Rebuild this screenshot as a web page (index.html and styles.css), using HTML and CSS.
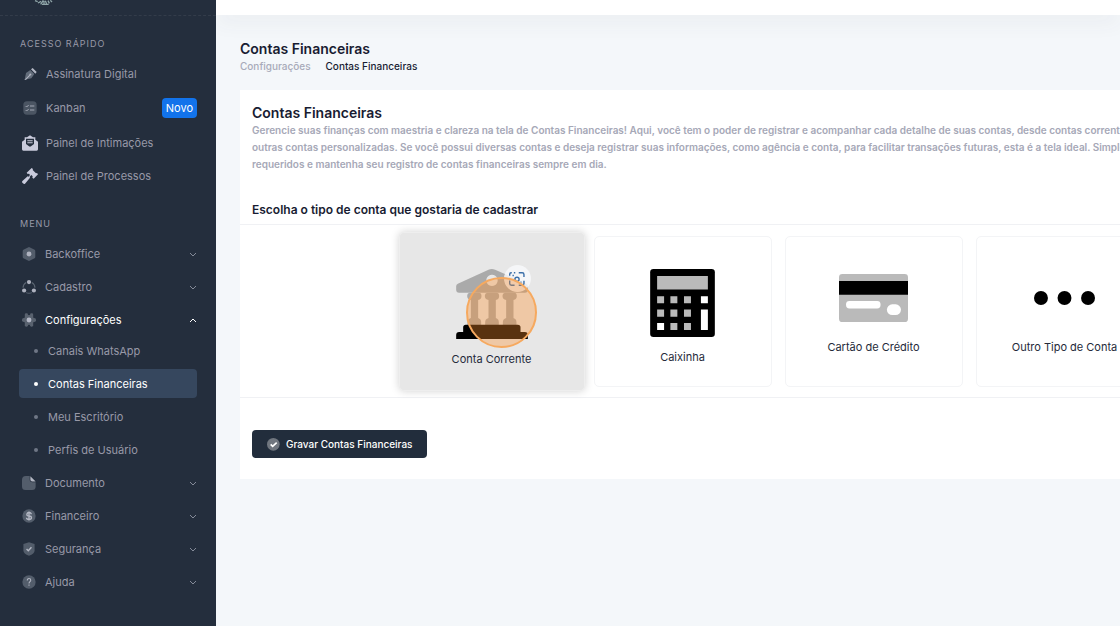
FILE: index.html
```
<!DOCTYPE html>
<html lang="pt-BR">
  <head>
    <meta charset="UTF-8" />
    <title>Contas Financeiras</title>
    <link rel="stylesheet" href="styles.css">
  </head>

  <body>
    <aside class="sidebar">
      <div class="logo">
        <svg width="22" height="5" viewBox="0 0 66 15" fill="none" stroke="#8fa5a8" stroke-width="4">
          <path d="M3 2l8 3M12 9l9-5M20 13l8-12M30 12V2M38 12l-4-10M46 10L42 2M54 6l-5-5M24 13h20" />
        </svg>
      </div>

      <nav class="quick">
        <h2>Acesso Rápido</h2>
        <a href="#">
          <svg viewBox="0 0 42 42">
            <path fill="#626c7a" d="M5 38l4-20 13-9 12 12-9 13z" />
            <path fill="#b3b7c4" d="M24 7l5-4 12 12-4 5zM4 39l3-3 12-12c-1-5 5-6 6-2 0 3-2 4-4 4L9 38z" />
          </svg>
          <span>Assinatura Digital</span>
        </a>
        <a href="#" class="tall">
          <svg viewBox="0 0 42 42">
            <rect x="1" y="1" width="40" height="40" rx="11" fill="#4b5563" />
            <path fill="none" stroke="#a4a9b6" stroke-width="3" d="M8 15l3 3 6-6M8 27l3 3 6-6M21 15h13M21 27h13" />
          </svg>
          <span>Kanban</span>
          <b class="badge">Novo</b>
        </a>
        <a href="#">
          <svg class="big" viewBox="0 0 48 48">
            <path fill="#c9cbdc" fill-rule="evenodd" d="M8 7h7l9-6 9 6h7v7l8 6v23q0 4-4 4H4q-4 0-4-4V20l8-6zM12 11v16l9 7q3 2 6 0l9-7V11z" />
            <path fill="#c9cbdc" d="M16 16h16v3H16zM16 22h16v3H16z" />
          </svg>
          <span>Painel de Intimações</span>
        </a>
        <a href="#">
          <svg class="big" viewBox="0 0 48 48">
            <path fill="#c9cbdc" d="M29 0l4 3-1 3 10 10 3-1 3 4-13 13-4-3 1-4-4-4-5 5 1 3L9 47q-3 2-6-1l-2-2q-2-3 1-6l15-13 3 1 4-5-3-4-4 1-3-4z" />
          </svg>
          <span>Painel de Processos</span>
        </a>
      </nav>

      <nav class="menu">
        <h2>Menu</h2>
        <a href="#">
          <svg viewBox="0 0 40 40">
            <path fill="#535d6b" d="M20 0l16 8q2 1 2 4v16q0 3-2 4l-16 8-16-8q-2-1-2-4V12q0-3 2-4z" />
            <circle cx="20" cy="20" r="7" fill="#aeb2bf" />
          </svg>
          <span>Backoffice</span>
          <svg class="chevron" viewBox="0 0 8 8"><path d="M1 3l3 3 3-3" /></svg>
        </a>
        <a href="#">
          <svg viewBox="0 0 40 40">
            <path fill="none" stroke="#5c6673" stroke-width="3" d="M12 7Q3 12 3 22M28 7q9 5 9 15M12 36q8 4 16 0" />
            <g fill="#aeb2bf"><circle cx="20" cy="6" r="6" /><circle cx="6" cy="30" r="6" /><circle cx="34" cy="30" r="6" /></g>
          </svg>
          <span>Cadastro</span>
          <svg class="chevron" viewBox="0 0 8 8"><path d="M1 3l3 3 3-3" /></svg>
        </a>
        <a href="#" class="open">
          <svg viewBox="0 0 40 40">
            <g fill="#59626f">
              <circle cx="20" cy="20" r="14" />
              <rect x="8" y="1" width="9" height="38" rx="4" /><rect x="23" y="1" width="9" height="38" rx="4" />
              <rect x="0" y="14" width="40" height="12" rx="5" />
            </g>
            <circle cx="20" cy="20" r="7" fill="#b4b8c6" />
          </svg>
          <span>Configurações</span>
          <svg class="chevron" viewBox="0 0 8 8"><path d="M1 6l3-3 3 3" /></svg>
        </a>
        <div class="submenu">
          <a href="#">Canais WhatsApp</a>
          <a href="#" class="active">Contas Financeiras</a>
          <a href="#">Meu Escritório</a>
          <a href="#">Perfis de Usuário</a>
        </div>
        <a href="#">
          <svg viewBox="0 0 40 40">
            <path fill="#535d6b" d="M11 0h11v10q0 8 8 8h9v12q0 10-10 10H10Q0 40 0 30V11Q0 0 11 0z" />
            <path fill="#b4b8c4" d="M24 1l15 15H29q-5 0-5-5z" />
          </svg>
          <span>Documento</span>
          <svg class="chevron" viewBox="0 0 8 8"><path d="M1 3l3 3 3-3" /></svg>
        </a>
        <a href="#">
          <svg viewBox="0 0 40 40">
            <circle cx="20" cy="20" r="19" fill="#535d6b" />
            <path fill="none" stroke="#b4b8c4" stroke-width="4" d="M27 15q-2-5-7-5t-6 5 6 5 7 5-7 5-7-5M20 7v26" />
          </svg>
          <span>Financeiro</span>
          <svg class="chevron" viewBox="0 0 8 8"><path d="M1 3l3 3 3-3" /></svg>
        </a>
        <a href="#">
          <svg viewBox="0 0 40 40">
            <path fill="#535d6b" d="M20 1l16 5v18q0 9-16 15Q4 33 4 24V6z" />
            <path fill="none" stroke="#b4b8c4" stroke-width="4" d="M13 20l5 5 9-10" />
          </svg>
          <span>Segurança</span>
          <svg class="chevron" viewBox="0 0 8 8"><path d="M1 3l3 3 3-3" /></svg>
        </a>
        <a href="#">
          <svg viewBox="0 0 40 40">
            <circle cx="20" cy="20" r="19" fill="#535d6b" />
            <path fill="none" stroke="#b4b8c4" stroke-width="3" d="M15 16q0-6 5-6t5 5c0 4-5 4-5 9M20 27v4" />
          </svg>
          <span>Ajuda</span>
          <svg class="chevron" viewBox="0 0 8 8"><path d="M1 3l3 3 3-3" /></svg>
        </a>
      </nav>
    </aside>

    <div class="page">
      <header class="topbar"></header>
      <main>
        <h1>Contas Financeiras</h1>
        <div class="breadcrumb">
          <a href="#">Configurações</a>
          <span>Contas Financeiras</span>
        </div>

        <form class="panel">
          <div class="intro">
            <h2>Contas Financeiras</h2>
            <p>
              Gerencie suas finanças com maestria e clareza na tela de Contas Financeiras! Aqui, você tem o poder de registrar e acompanhar cada detalhe de suas contas, desde contas correntes<br>
              outras contas personalizadas. Se você possui diversas contas e deseja registrar suas informações, como agência e conta, para facilitar transações futuras, esta é a tela ideal. Simplesmente<br>
              requeridos e mantenha seu registro de contas financeiras sempre em dia.
            </p>
            <h3>Escolha o tipo de conta que gostaria de cadastrar</h3>
          </div>

          <div class="types">
            <button type="button" class="type selected">
              <svg width="72" height="70" viewBox="225 143 215 210">
                <path fill="#aaa" fill-rule="evenodd" d="M225 195q0-6 5-8l92-42q10-4 20 0l93 42q5 2 5 8v10q0 9-9 9H234q-9 0-9-9zM332 160a17 17 0 1 0 1 0z" />
                <g fill="#aaa">
                  <path id="column" d="M268 214h25q8 0 8 10t-10 12v54q9 3 9 13v8h-41v-8q0-10 10-13v-54q-11-2-11-12t10-10z" />
                  <use href="#column" x="53" /><use href="#column" x="106" />
                </g>
                <path d="M254 310h156q8 0 8 8v14h13q9 0 9 9v12H225v-12q0-9 9-9h12v-14q0-8 8-8z" />
              </svg>
              <span>Conta Corrente</span>
              <i class="lens">
                <svg width="16" height="14" viewBox="0 0 46 40" fill="none" stroke="#3a6ea8" stroke-width="4">
                  <path d="M2 11V6q0-4 4-4h2M14 2h4M28 2h10q5 0 5 5v7M2 24v9q0 5 5 5h9M28 38h10q5 0 5-5v-8" />
                  <circle cx="23" cy="21" r="6" /><path d="M10 10h4M33 29h3" />
                </svg>
              </i>
              <i class="ring"></i>
            </button>
            <button type="button" class="type">
              <svg width="65" height="68" viewBox="174 146 195 205">
                <rect x="174" y="146" width="195" height="205" rx="10" />
                <path fill="#bababa" d="M195 167h153v41H195zM195 228h21v21h-21zM235 228h21v21h-21zM276 228h21v21h-21zM195 268h21v22h-21zM235 268h21v22h-21zM276 268h21v22h-21zM235 309h21v21h-21zM276 309h21v21h-21z" />
                <path fill="#fff" d="M327 228h21v21h-21zM327 268h21v62h-21zM195 309h21v21h-21z" />
              </svg>
              <span>Caixinha</span>
            </button>
            <button type="button" class="type">
              <svg width="69" height="58" viewBox="57 162 206 144">
                <rect x="57" y="162" width="206" height="144" rx="10" fill="#bababa" />
                <path d="M57 183h206v41H57z" />
                <rect x="78" y="243" width="103" height="22" rx="10" fill="#fff" />
                <rect x="200" y="253" width="42" height="32" rx="16" fill="#fff" />
              </svg>
              <span>Cartão de Crédito</span>
            </button>
            <button type="button" class="type">
              <svg width="61" height="58" viewBox="642 212 184 42">
                <circle cx="663" cy="233" r="21" /><circle cx="734" cy="233" r="21" /><circle cx="805" cy="233" r="21" />
              </svg>
              <span>Outro Tipo de Conta</span>
            </button>
          </div>

          <div class="actions">
            <button type="submit" class="save">
              <svg width="13" height="13" viewBox="0 0 39 39">
                <circle cx="19" cy="19" r="19" fill="#70767f" />
                <path fill="none" stroke="#fff" stroke-width="5" d="M11 19l6 6 12-11" />
              </svg>
              Gravar Contas Financeiras
            </button>
          </div>
        </form>
      </main>
    </div>
  </body>
</html>
```
FILE: styles.css
```
*,
*:before,
*:after {
  box-sizing: border-box;
}

body {
  margin: 0;
  display: flex;
  min-height: 100vh;
  overflow: hidden;
  font-family: Inter, "Liberation Sans", sans-serif;
  font-size: 11px;
  color: #181c32;
  background-color: #f4f7fa;
}

h1,
h2,
h3,
p {
  margin: 0;
}

a {
  color: inherit;
  text-decoration: none;
}

button {
  font-family: inherit;
  cursor: pointer;
}

.sidebar {
  flex: 0 0 216px;
  background-color: #242e3d;
  color: #9899a8;
}

.logo {
  height: 16px;
  padding-left: 34px;
  border-bottom: 1px dashed #333c4a;
}

.logo svg {
  display: block;
}

.sidebar h2 {
  padding-left: 20px;
  font-size: 9px;
  font-weight: 400;
  line-height: 12px;
  letter-spacing: 1px;
  text-transform: uppercase;
}

.quick {
  padding-top: 22px;
}

.quick h2 {
  margin-bottom: 7px;
}

.quick > a,
.menu > a {
  display: flex;
  align-items: center;
  height: 33px;
  padding: 0 19px 0 22px;
}

.quick > a.tall {
  height: 36px;
}

.quick > a > svg {
  width: 14px;
  height: 14px;
  margin: 0 9px 0 1px;
}

.quick > a > svg.big {
  width: 16px;
  height: 16px;
  margin: 0 8px 0 0;
}

.badge {
  margin-left: auto;
  padding: 0 4px;
  border-radius: 4px;
  font-weight: 400;
  line-height: 20px;
  color: #fff;
  background-color: #1273eb;
}

.menu {
  padding-top: 26px;
}

.menu h2 {
  margin-bottom: 7px;
}

.menu > a > svg:first-child {
  width: 14px;
  height: 14px;
  margin-right: 9px;
}

.menu .chevron {
  width: 8px;
  height: 8px;
  margin-left: auto;
  fill: none;
  stroke: #858b99;
  stroke-width: 1;
}

.menu .open {
  color: #fff;
}

.open .chevron {
  stroke: #fff;
}

.submenu {
  display: flex;
  flex-direction: column;
  gap: 4px;
  padding: 0 19px 2px;
}

.submenu a {
  display: flex;
  align-items: center;
  height: 29px;
  padding-left: 15px;
  border-radius: 4px;
}

.submenu a:before {
  content: "";
  width: 4px;
  height: 4px;
  margin-right: 10px;
  border-radius: 50%;
  background-color: #6f7786;
}

.submenu .active {
  color: #fff;
  background-color: #36475e;
}

.submenu .active:before {
  background-color: #fff;
}

.page {
  flex: 1;
  min-width: 0;
  overflow: hidden;
}

.topbar {
  height: 15px;
  background-color: #fff;
  box-shadow: 0 8px 20px rgba(60, 70, 90, 0.06);
}

main {
  padding: 24px;
}

h1 {
  font-size: 14px;
  font-weight: 600;
  line-height: 20px;
}

.breadcrumb {
  display: flex;
  gap: 15px;
  font-size: 10px;
  font-weight: 500;
  line-height: 14px;
}

.breadcrumb a {
  color: #a8aab9;
}

/* the panel keeps its desktop width and runs off narrow windows */
.panel {
  min-width: 1076px;
  margin-top: 17px;
  background-color: #fff;
}

.intro {
  padding: 13px 12px 6px;
}

.intro h2 {
  font-size: 14px;
  font-weight: 600;
  line-height: 19px;
}

.intro p {
  font-size: 10px;
  font-weight: 600;
  line-height: 17px;
  color: #a6a8b7;
  white-space: nowrap;
}

.intro h3 {
  margin-top: 28px;
  font-size: 12px;
  font-weight: 600;
  line-height: 17px;
}

.types {
  display: flex;
  justify-content: center;
  gap: 13px;
  padding: 11px 0 10px;
  border-top: 1px solid #f0f1f4;
  border-bottom: 1px solid #f0f1f4;
}

.type {
  flex: 0 0 178px;
  display: flex;
  flex-direction: column;
  align-items: center;
  gap: 13px;
  min-height: 151px;
  padding: 32px 0 0;
  border: 1px solid #f3f4f6;
  border-radius: 5px;
  font-size: 11px;
  line-height: 14px;
  color: #252a3a;
  background-color: #fff;
}

.selected {
  position: relative;
  flex-basis: 186px;
  min-height: 159px;
  margin: -4px;
  padding-top: 36px;
  border-color: #eee;
  background-color: #e7e7e7;
  box-shadow: 0 0 8px rgba(0, 0, 0, 0.18);
}

.lens {
  position: absolute;
  top: 32px;
  left: 104px;
  display: flex;
  align-items: center;
  justify-content: center;
  width: 27px;
  height: 27px;
  border-radius: 50%;
  background-color: rgba(247, 248, 250, 0.85);
}

.ring {
  position: absolute;
  top: 44px;
  left: 66px;
  width: 71px;
  height: 71px;
  border: 2px solid #f6a95f;
  border-radius: 50%;
  background-color: rgba(255, 144, 44, 0.35);
}

.actions {
  padding: 32px 12px 21px;
}

.save {
  display: flex;
  align-items: center;
  gap: 6px;
  height: 28px;
  padding: 0 15px;
  border: 0;
  border-radius: 4px;
  font-size: 10px;
  font-weight: 500;
  color: #fff;
  background-color: #222d3c;
}
```
